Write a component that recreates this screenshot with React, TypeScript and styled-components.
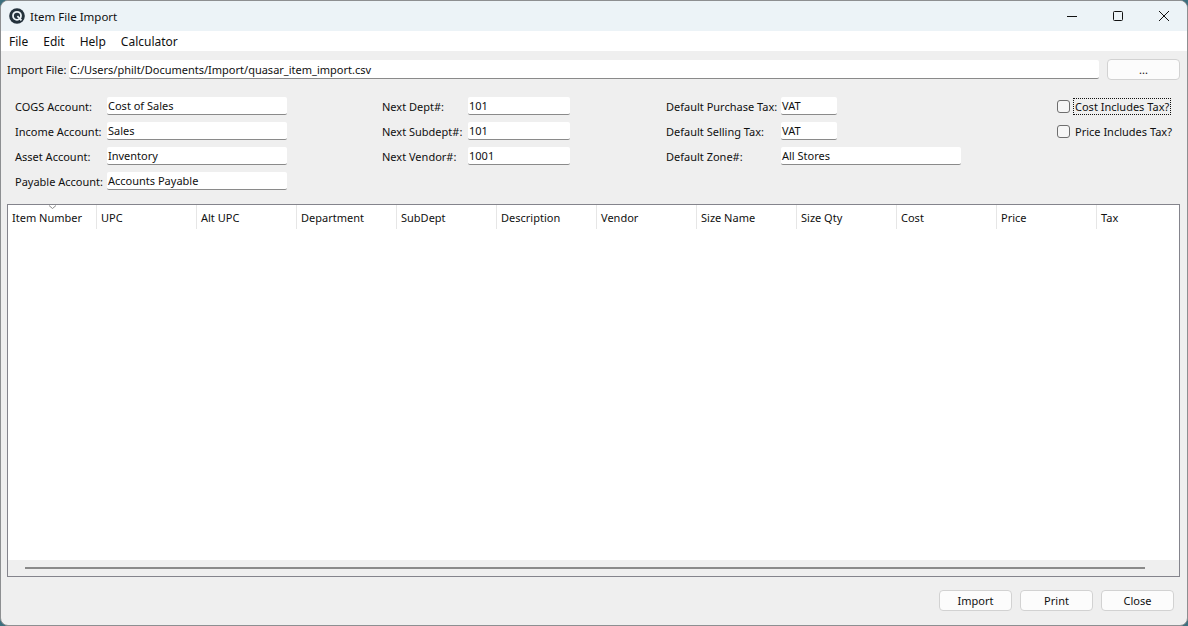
import styled, { createGlobalStyle } from "styled-components";

const Global = createGlobalStyle`
  html, body {
    margin: 0;
    padding: 0;
    height: 100%;
    background: #3c6f7e;
  }
  * {
    box-sizing: border-box;
  }
`;

const Window = styled.div`
  width: 1188px;
  height: 626px;
  display: flex;
  flex-direction: column;
  overflow: hidden;
  background: #efefef;
  border: 1px solid #8d8f91;
  border-radius: 8px;
  color: #101010;
  font-family: "Noto Sans", "Open Sans", sans-serif;
  font-size: 11px;
`;

const TitleBar = styled.div`
  height: 30px;
  flex: none;
  display: flex;
  align-items: center;
  padding-left: 8px;
  background: #ecf3f7;
`;

const Title = styled.span`
  margin-left: 5px;
  font-size: 11.5px;
`;

const WinButtons = styled.div`
  margin-left: auto;
  display: flex;
`;

const WinButton = styled.div`
  width: 46px;
  height: 30px;
  display: flex;
  align-items: center;
  justify-content: center;
`;

const MenuBar = styled.div`
  height: 20px;
  flex: none;
  display: flex;
  align-items: center;
  padding-left: 8px;
  gap: 15px;
  background: #ffffff;
  font-size: 12px;
`;

const FileRow = styled.div`
  display: flex;
  align-items: center;
  margin-top: 8px;
  padding: 0 7px 0 6px;
`;

const FileLabel = styled.span`
  width: 62px;
`;

const Field = styled.div<{ $width?: number }>`
  height: 18px;
  width: ${(props) => (props.$width ? `${props.$width}px` : "auto")};
  display: flex;
  align-items: center;
  padding-left: 1px;
  background: #ffffff;
  border-bottom: 1px solid #8a8a8a;
  border-radius: 2px;
  white-space: nowrap;
`;

const FileField = styled(Field)`
  flex: 1;
  height: 19px;
`;

const Button = styled.button`
  width: 73px;
  height: 21px;
  padding: 0;
  background: #fcfcfc;
  border: 1px solid #d2d2d2;
  border-radius: 4px;
  color: #101010;
  font: inherit;
`;

const BrowseButton = styled(Button)`
  margin-left: 8px;
`;

const Form = styled.div`
  display: flex;
  margin-top: 17px;
  padding-left: 14px;
`;

const Column = styled.div<{ $width: number; $label: number }>`
  width: ${(props) => props.$width}px;
  flex: none;
  display: grid;
  grid-template-columns: ${(props) => props.$label}px auto;
  grid-auto-rows: 18px;
  row-gap: 7px;
  justify-content: start;
  align-items: center;
`;

const Checks = styled.div`
  margin-left: 6px;
  display: grid;
  grid-auto-rows: 18px;
  row-gap: 7px;
`;

const CheckRow = styled.div`
  display: flex;
  align-items: center;
`;

const Box = styled.span`
  width: 13px;
  height: 13px;
  flex: none;
  background: #f6f6f6;
  border: 1px solid #6e6e6e;
  border-radius: 3px;
`;

const CheckLabel = styled.span<{ $focus?: boolean }>`
  margin-left: 3px;
  padding: 0 1px;
  border: 1px dotted ${(props) => (props.$focus ? "#111111" : "transparent")};
  line-height: 15px;
  white-space: nowrap;
`;

const Table = styled.div`
  height: 373px;
  margin: 14px 7px 0 6px;
  display: flex;
  flex-direction: column;
  background: #ffffff;
  border: 1px solid #84848c;
`;

const HeaderRow = styled.div`
  height: 24px;
  flex: none;
  display: flex;
  position: relative;
`;

const HeaderCell = styled.div`
  width: 100px;
  flex: none;
  display: flex;
  align-items: center;
  padding-left: 4px;
  border-right: 1px solid #e6e6e6;
  &:first-child {
    width: 89px;
  }
  &:last-child {
    flex: 1;
    border-right: 0;
  }
`;

const SortMark = styled.svg`
  position: absolute;
  left: 40px;
  top: 0;
`;

const TableBody = styled.div`
  flex: 1;
`;

const ScrollTrack = styled.div`
  height: 16px;
  flex: none;
  display: flex;
  align-items: center;
  padding: 0 34px 0 17px;
  background: #efefef;
`;

const ScrollThumb = styled.div`
  flex: 1;
  height: 2px;
  background: #8a8a8a;
`;

const Footer = styled.div`
  display: flex;
  justify-content: flex-end;
  gap: 8px;
  margin-top: 13px;
  padding-right: 13px;
`;

const columns = [
  "Item Number",
  "UPC",
  "Alt UPC",
  "Department",
  "SubDept",
  "Description",
  "Vendor",
  "Size Name",
  "Size Qty",
  "Cost",
  "Price",
  "Tax",
];

export default function App() {
  return (
    <Window>
      <Global />
      <TitleBar>
        <svg width="16" height="16" viewBox="0 0 16 16" fill="none">
          <circle cx="8" cy="8" r="7.8" fill="#24323c" />
          <circle cx="8" cy="7.8" r="4" stroke="#ecf3f7" strokeWidth="1.8" />
          <path d="M8.4 8.2 L12.4 12.4" stroke="#ecf3f7" strokeWidth="1.8" />
        </svg>
        <Title>Item File Import</Title>
        <WinButtons>
          <WinButton>
            <svg width="12" height="12" viewBox="0 0 12 12">
              <path d="M1 6.5 H11" stroke="#111" strokeWidth="1" />
            </svg>
          </WinButton>
          <WinButton>
            <svg width="12" height="12" viewBox="0 0 12 12" fill="none">
              <rect x="1.5" y="1.5" width="9" height="9" rx="1" stroke="#111" />
            </svg>
          </WinButton>
          <WinButton>
            <svg width="12" height="12" viewBox="0 0 12 12">
              <path d="M1 1 L11 11 M11 1 L1 11" stroke="#111" strokeWidth="1" />
            </svg>
          </WinButton>
        </WinButtons>
      </TitleBar>
      <MenuBar>
        <span>File</span>
        <span>Edit</span>
        <span>Help</span>
        <span>Calculator</span>
      </MenuBar>
      <FileRow>
        <FileLabel>Import File:</FileLabel>
        <FileField>C:/Users/philt/Documents/Import/quasar_item_import.csv</FileField>
        <BrowseButton>...</BrowseButton>
      </FileRow>
      <Form>
        <Column $width={367} $label={92}>
          <span>COGS Account:</span>
          <Field $width={180}>Cost of Sales</Field>
          <span>Income Account:</span>
          <Field $width={180}>Sales</Field>
          <span>Asset Account:</span>
          <Field $width={180}>Inventory</Field>
          <span>Payable Account:</span>
          <Field $width={180}>Accounts Payable</Field>
        </Column>
        <Column $width={284} $label={86}>
          <span>Next Dept#:</span>
          <Field $width={102}>101</Field>
          <span>Next Subdept#:</span>
          <Field $width={102}>101</Field>
          <span>Next Vendor#:</span>
          <Field $width={102}>1001</Field>
        </Column>
        <Column $width={385} $label={115}>
          <span>Default Purchase Tax:</span>
          <Field $width={56}>VAT</Field>
          <span>Default Selling Tax:</span>
          <Field $width={56}>VAT</Field>
          <span>Default Zone#:</span>
          <Field $width={180}>All Stores</Field>
        </Column>
        <Checks>
          <CheckRow>
            <Box />
            <CheckLabel $focus>Cost Includes Tax?</CheckLabel>
          </CheckRow>
          <CheckRow>
            <Box />
            <CheckLabel>Price Includes Tax?</CheckLabel>
          </CheckRow>
        </Checks>
      </Form>
      <Table>
        <HeaderRow>
          {columns.map((name) => (
            <HeaderCell key={name}>{name}</HeaderCell>
          ))}
          <SortMark width="9" height="5" viewBox="0 0 9 5" fill="none">
            <path d="M1 0.5 L4.5 3.5 L8 0.5" stroke="#8a8a8a" />
          </SortMark>
        </HeaderRow>
        <TableBody />
        <ScrollTrack>
          <ScrollThumb />
        </ScrollTrack>
      </Table>
      <Footer>
        <Button>Import</Button>
        <Button>Print</Button>
        <Button>Close</Button>
      </Footer>
    </Window>
  );
}
